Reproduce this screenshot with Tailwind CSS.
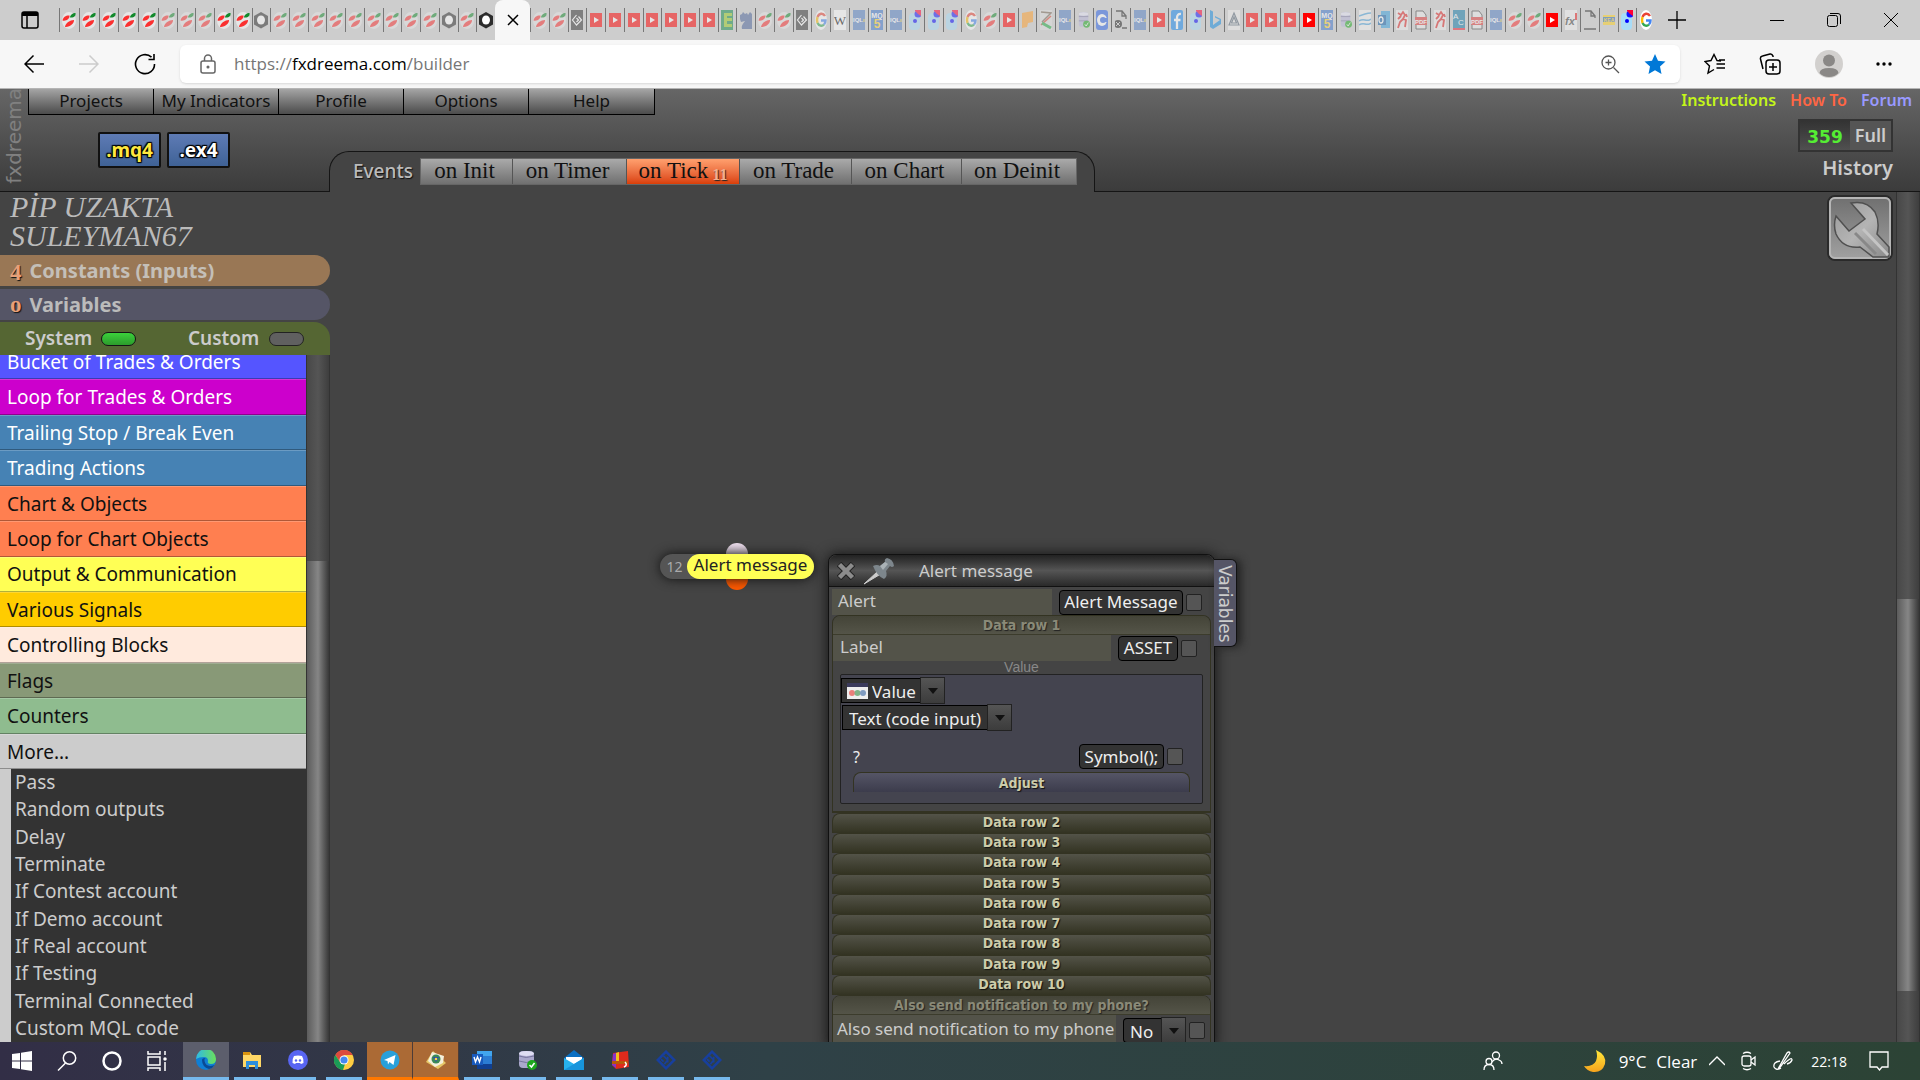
<!DOCTYPE html>
<html lang="en">
<head>
    <meta charset="UTF-8">
    <meta name="viewport" content="width=device-width, initial-scale=1.0">
    <title>fxDreema builder</title>
    <script src="https://cdn.jsdelivr.net/npm/@tailwindcss/browser@4"></script>
</head>
<body class="h-screen flex flex-col overflow-hidden bg-[#444444] font-['Noto_Sans',sans-serif] text-[#cccccc]">

    <!-- Gradients need a rendered svg, so this one is sized to nothing instead of hidden -->
    <svg class="absolute size-0">
        <defs>
            <linearGradient id="lg-edge" x1="0" y1="0" x2="1" y2="0"><stop offset="0" stop-color="#2fb9e6"/><stop offset="1" stop-color="#6be05a"/></linearGradient>
            <linearGradient id="lg-moon" x1="0" y1="0" x2="0" y2="1"><stop offset="0" stop-color="#ffe93b"/><stop offset="1" stop-color="#f6a21c"/></linearGradient>
            <linearGradient id="lg-wrench" x1="0" y1="0" x2="0" y2="1"><stop offset="0" stop-color="#707070"/><stop offset="1" stop-color="#a0a0a0"/></linearGradient>
            <linearGradient id="lg-steel" x1="0" y1="0" x2="1" y2="1"><stop offset="0" stop-color="#9a9a9a"/><stop offset=".5" stop-color="#b4b4b4"/><stop offset="1" stop-color="#8a8a8a"/></linearGradient>
        </defs>
    </svg>

    <!-- Favicons -->
    <svg class="hidden">
        <symbol id="fx" viewBox="0 0 14 20"><ellipse cx="7" cy="10.500" rx="7" ry="8.500" fill="#e6e6e6"/><path d="M8 7.500C8 5 11 3 13.500 3C14 6 12 8 8 7.500z" fill="#138a2c"/><path d="M.5 10.500C1 7 4.500 5 7.500 5.500C8 8.500 4.500 11.500.5 10.500zM3 17C3.500 13 8 10 12 10C12.500 13 8 17.500 3 17z" fill="#fa3030"/></symbol>
        <symbol id="ring" viewBox="0 0 14 20"><path d="M7 2L14 6V14.500L7 18.500L0 14.500V6z" fill="#2c2c2c"/><ellipse cx="7" cy="10" rx="4" ry="4.500" fill="#fff"/></symbol>
        <symbol id="code" viewBox="0 0 12 20"><path d="M0 0h12v20H0z" fill="#333"/><path d="M5.500 5L1.500 10L5.500 15L10.500 10L7.500 6.500M5.500 8L7.500 10L5.500 12" stroke="#fff" fill="none" stroke-width="1.200"/></symbol>
        <symbol id="yt" viewBox="0 0 12 20"><path d="M0 3h12v14H0z" fill="#f00"/><path d="M4 7L9 10L4 13z" fill="#fff"/></symbol>
        <symbol id="ee" viewBox="0 0 12 20"><path d="M0 0h12v20H0z" fill="#138a4c"/><path d="M3 3h8v3H6v2h5v3H6v3h5v3H3z" fill="#9c2"/></symbol>
        <symbol id="knight" viewBox="0 0 12 20"><path d="M0 5L2 4L3 2L5 4L7 3L8 5L10 2L12 4V19H2C1 15 4 13 5 11L1 12L0 9z" fill="#4d659b"/></symbol>
        <symbol id="goog" viewBox="0 0 12 20"><ellipse cx="6" cy="10" rx="6" ry="10" fill="#fff"/><g fill="none" stroke-width="2.400"><path d="M10 6A4.500 6 0 0 0 2.500 7" stroke="#ea4335"/><path d="M2.500 7A5 7 0 0 0 2.500 13" stroke="#fbbc05"/><path d="M2.500 13A4.500 6 0 0 0 9 14.500" stroke="#34a853"/><path d="M9 14.500Q10.500 13 10.500 10.500H6" stroke="#4285f4"/></g></symbol>
        <symbol id="wiki" viewBox="0 0 12 20"><path d="M0 0h12v20H0z" fill="#fff"/><text x="6" y="15" text-anchor="middle" font-family="Liberation Serif" font-size="13">W</text></symbol>
        <symbol id="mql" viewBox="0 0 12 20"><path d="M0 0h12v20H0z" fill="#5580c4"/><text x="5" y="12" text-anchor="middle" font-family="Liberation Sans" font-weight="bold" font-size="6" fill="#fff">IQL</text><path d="M11 9v3" stroke="#fd3"/></symbol>
        <symbol id="mq5" viewBox="0 0 12 20"><path d="M0 0h12v20H0z" fill="#3f76cc"/><text x="6" y="8" text-anchor="middle" font-family="Liberation Sans" font-weight="bold" font-size="7" fill="#fff">MQ</text><text x="6" y="18" text-anchor="middle" font-family="Liberation Sans" font-weight="bold" font-size="12" fill="#ffd42a">5</text></symbol>
        <symbol id="face" viewBox="0 0 12 20"><rect x="0" y="3" width="11" height="17" rx="4" fill="#a8dcf7"/><circle cx="9" cy="4" r="3.500" fill="#11f"/><path d="M6 1L9 4L12 6V0H6z" fill="#f03"/><circle cx="6" cy="11" r="2" fill="#00f"/></symbol>
        <symbol id="orange" viewBox="0 0 12 20"><path d="M1 3L12 1V12L7 13L6 17L1 18z" fill="#ffa02e"/></symbol>
        <symbol id="pens" viewBox="0 0 12 20"><path d="M0 0h12v20H0z" fill="#ddd"/><path d="M1 2L11 3L2 12" fill="none" stroke="#765" stroke-width="1.500"/><path d="M1 15L11 6" stroke="#d43" stroke-width="1.500"/><path d="M2 13L11 18" stroke="#2a4" stroke-width="3"/></symbol>
        <symbol id="db" viewBox="0 0 14 20"><rect x="1" y="1" width="11" height="17" rx="3" fill="#b9b7da"/><path d="M1 6h11M1 11h11" stroke="#77759d"/><ellipse cx="6.500" cy="3" rx="5.500" ry="2" fill="#e8e8f8"/><circle cx="10" cy="15" r="4" fill="#1da81d"/><path d="M8 15L9.500 17L12 13" stroke="#fff" fill="none"/></symbol>
        <symbol id="cc" viewBox="0 0 12 20"><rect width="12" height="20" rx="3" fill="#2b62e8"/><ellipse cx="6" cy="10" rx="5" ry="6" fill="#fff"/><circle cx="7" cy="10" r="3" fill="#2b62e8"/><path d="M8 8H12V12H8z" fill="#2b62e8"/></symbol>
        <symbol id="doc" viewBox="0 0 12 20"><path d="M1 1H7L11 6M7 1V6H11V8M0 19H12" fill="none" stroke="#222" stroke-width="1.300"/></symbol>
        <symbol id="docx" viewBox="0 0 12 20"><path d="M1 1H7L11 6M7 1V6H11V9M7 18H12" fill="none" stroke="#222" stroke-width="1.300"/><circle cx="3" cy="14" r="4" fill="#222"/><path d="M1 12L5 16M5 12L1 16" stroke="#ccc"/></symbol>
        <symbol id="fb" viewBox="0 0 12 20"><rect width="12" height="20" rx="2" fill="#1687ee"/><path d="M10 4Q6 3.500 6 8V19M3 10H9.500" fill="none" stroke="#fff" stroke-width="2.300"/></symbol>
        <symbol id="bing" viewBox="0 0 12 20"><path d="M1 0L4 1.500V15L11 10L6 7.500V6L12 9V14L4 19L1 17z" fill="#138be0"/></symbol>
        <symbol id="tri" viewBox="0 0 12 20"><path d="M0 0h12v20H0z" fill="#eee"/><path d="M6 3L11 15H1zM6 7L8.500 13H3.500z" fill="none" stroke="#567" stroke-width="1.200"/></symbol>
        <symbol id="wave" viewBox="0 0 12 20"><path d="M0 0h12v20H0z" fill="#f3f3f3"/><path d="M0 6Q3 5 6 4T12 3M0 11Q3 9 6 10T12 9M0 15Q3 13 6 14T12 13" fill="none" stroke="#4aa3dd" stroke-width="1.500"/></symbol>
        <symbol id="outlook" viewBox="0 0 12 20"><path d="M3 1H12V18H3z" fill="#3aa0dd"/><path d="M0 5H8V15H0z" fill="#0f5fa8"/><ellipse cx="3" cy="10" rx="2" ry="3" fill="none" stroke="#fff" stroke-width="1.300"/></symbol>
        <symbol id="lion" viewBox="0 0 12 20"><path d="M0 0h12v20H0z" fill="#eee"/><path d="M2 3L5 5L7 2L9 5L7 9L10 10L9 17M7 9L4 12L2 18M5 6L2 9M10 4L11 7" fill="none" stroke="#e02525" stroke-width="1.800"/></symbol>
        <symbol id="pdf" viewBox="0 0 12 20"><path d="M1 6V1H8L11 5V19H1z" fill="#eee" stroke="#444"/><path d="M0 7h12v8H0z" fill="#e03a3a"/><text x="6" y="13.500" text-anchor="middle" font-family="Liberation Sans" font-weight="bold" font-size="6" fill="#fff">PDF</text></symbol>
        <symbol id="cb" viewBox="0 0 12 20"><path d="M0 0h12v20H0z" fill="#137ba8"/><path d="M0 18h12v2H0z" fill="#e23"/><text x="0" y="9" font-family="Liberation Sans" font-size="8" fill="#fff">A</text><text x="5" y="15" font-family="Liberation Sans" font-size="8" fill="#fff">C</text></symbol>
        <symbol id="fxi" viewBox="0 0 12 20"><path d="M0 0h12v20H0z" fill="#f3f3f3"/><text x="0" y="15" font-family="Liberation Sans" font-style="italic" font-weight="bold" font-size="11" fill="#444">fx</text><path d="M11 3V10" stroke="#e22" stroke-width="2"/></symbol>
        <symbol id="ikea" viewBox="0 0 12 20"><path d="M0 5h12v10H0z" fill="#ffd21e"/><path d="M0 7h12v5H0z" fill="#3070b8"/><text x="6" y="12" text-anchor="middle" font-family="Liberation Sans" font-weight="bold" font-size="5" fill="#ffd21e">KEA</text></symbol>
        <symbol id="rune" viewBox="0 0 24 24"><path d="M12 2L22 12L12 22L2 12z" fill="none" stroke="#173f9e" stroke-width="3"/><path d="M9 7L14 12L10 17M6 11L9 14M14 8V15" stroke="#173f9e" stroke-width="2" fill="none"/></symbol>
    </svg>

    <!-- Browser tab strip -->
    <header class="flex h-10 shrink-0 bg-[#cdcdcd] text-black">
        <div class="flex w-[59px] items-center justify-center shrink-0">
            <svg class="size-5" viewBox="0 0 20 20" fill="none" stroke="black" stroke-width="1.500"><rect x="2" y="2" width="16" height="16" rx="2"/><path d="M2 5H18M7 6V18" /><path d="M2 4H18" stroke-width="4"/></svg>
        </div>
        <nav class="flex flex-99" data-tabs="fx! fx! fx! fx! fx!"></nav>
        <nav class="flex flex-337" data-tabs="fx fx fx fx! fx! ring fx fx fx fx fx fx fx fx fx ring fx ring!"></nav>
        <div class="flex w-[35px] shrink-0 items-center justify-center rounded-t-lg bg-[#f7f7f7]">
            <button aria-label="Close tab"><svg class="size-3" viewBox="0 0 12 12" stroke="black" stroke-width="1.500"><path d="M1 1L11 11M11 1L1 11"/></svg></button>
        </div>
        <nav class="flex flex-1125" data-tabs="fx fx code yt yt yt yt yt yt yt ee knight fx fx code goog wiki mql mq5 mql face face face goog fx yt orange pens mql db cc docx mql yt fb face bing tri yt yt yt yt! mq5 db wave outlook lion pdf lion cb pdf mql fx fx yt! fxi doc ikea face! goog!"></nav>
        <div class="flex w-[265px] shrink-0 items-center">
            <button aria-label="New tab" class="flex w-11 justify-center"><svg class="size-[18px]" viewBox="0 0 18 18" stroke="black" stroke-width="1.300"><path d="M9 0V18M0 9H18"/></svg></button>
            <div class="ml-auto flex">
                <button aria-label="Minimize" class="flex w-[57px] items-center justify-center"><svg class="size-3.5" viewBox="0 0 14 14" stroke="black"><path d="M0 7.500H14"/></svg></button>
                <button aria-label="Restore" class="flex w-[57px] items-center justify-center"><svg class="size-3.5" viewBox="0 0 14 14" stroke="black" fill="none"><rect x=".5" y="2.500" width="10" height="11" rx="2"/><path d="M3 .5H11Q13.500.5 13.500 3V11"/></svg></button>
                <button aria-label="Close" class="flex w-[58px] items-center justify-center"><svg class="size-3.5" viewBox="0 0 14 14" stroke="black"><path d="M0 0L14 14M14 0L0 14"/></svg></button>
            </div>
        </div>
    </header>

    <!-- Address bar -->
    <div class="flex h-[49px] shrink-0 items-center border-b border-[#b5b5b5] bg-[#f7f7f7] text-black">
        <div class="flex w-[180px] shrink-0 items-center justify-between pl-6 pr-6">
            <button aria-label="Back"><svg class="size-5" viewBox="0 0 20 20" fill="none" stroke="black" stroke-width="1.500"><path d="M20 10H1M9.500 1.500L1 10L9.500 18.500"/></svg></button>
            <button aria-label="Forward"><svg class="size-5" viewBox="0 0 20 20" fill="none" stroke="#cccccc" stroke-width="1.500"><path d="M0 10H19M10.500 1.500L19 10L10.500 18.500"/></svg></button>
            <button aria-label="Refresh"><svg class="size-[22px]" viewBox="0 0 22 22" fill="none" stroke="black" stroke-width="1.600"><path d="M20.500 11A9.500 9.500 0 1 1 17.500 4.200M20 1V6.500H14.500"/></svg></button>
        </div>
        <div class="flex h-[38px] grow items-center rounded-md bg-white pl-5 pr-3.5 shadow-sm">
            <svg class="h-5 w-4 shrink-0" viewBox="0 0 16 20" fill="none" stroke="#666" stroke-width="1.500"><rect x="1" y="7" width="14" height="12" rx="2"/><path d="M4.500 7V4.500A3.500 3.500 0 0 1 11.500 4.500V7"/><circle cx="8" cy="13" r=".8" fill="#666"/></svg>
            <p class="ml-[18px] grow font-['Open_Sans',sans-serif] text-[17px] text-[#767676]">https://<span class="text-black">fxdreema.com</span>/builder</p>
            <button aria-label="Zoom" class="mr-6"><svg class="size-[19px]" viewBox="0 0 19 19" fill="none" stroke="#555" stroke-width="1.300"><circle cx="7.500" cy="7.500" r="6.500"/><path d="M12.500 12.500L18 18M7.500 4.500V10.500M4.500 7.500H10.500"/></svg></button>
            <button aria-label="Edit favorite"><svg class="size-[22px]" viewBox="0 0 22 22" fill="#0078d7"><path d="M11 1L14 7.800L21.500 8.500L16 13.500L17.500 21L11 17.300L4.500 21L6 13.500L.5 8.500L8 7.800z"/></svg></button>
        </div>
        <div class="flex w-60 shrink-0 items-center justify-between pl-6 pr-7">
            <button aria-label="Favorites"><svg class="size-[22px]" viewBox="0 0 22 22" fill="none" stroke="black" stroke-width="1.400"><path d="M17 8L13 7.500L10 1.500L7 7.500L1 8.500L5.500 13L4 20L10 16.500M12.500 11H21M12.500 15H21M15 7H21"/></svg></button>
            <button aria-label="Collections"><svg class="size-[22px]" viewBox="0 0 22 22" fill="none" stroke="black" stroke-width="1.500"><rect x="7" y="7" width="14" height="14" rx="3"/><path d="M14 10V18M10 14H18M4 16L1.500 6Q1 3.500 3.500 3L11 1Q13 .5 14 3V4"/></svg></button>
            <button aria-label="Account"><svg class="size-7" viewBox="0 0 28 28"><circle cx="14" cy="14" r="14" fill="#d2d0ce"/><circle cx="14" cy="10.500" r="6" fill="#8a8886"/><path d="M4.500 23Q5 18 14 18T23.500 23Q20 27 14 27T4.500 23z" fill="#8a8886"/></svg></button>
            <button aria-label="Settings and more"><svg class="h-1 w-4" viewBox="0 0 16 4"><circle cx="2" cy="2" r="1.700"/><circle cx="8" cy="2" r="1.700"/><circle cx="14" cy="2" r="1.700"/></svg></button>
        </div>
    </div>

    <!-- Builder top bar -->
    <div class="flex h-[103px] shrink-0 bg-linear-to-b from-[#666666] to-[#3b3b3b]">
        <div class="flex w-7 shrink-0 items-center justify-center border-b border-[#151515] pb-2">
            <span class="rotate-180 font-['DejaVu_Sans',sans-serif] text-[20px] leading-none text-[#808080] [writing-mode:vertical-rl]">fxdreema</span>
        </div>
        <div class="relative flex grow flex-col">
            <nav class="flex h-[26px] w-max divide-x divide-black border-x border-b border-black text-center text-[17px] leading-[23px] text-[#111111]">
                <a href="#" class="w-[125px] bg-linear-to-b from-[#a5a5a5] to-[#4c4c4c]">Projects</a>
                <a href="#" class="w-[125px] bg-linear-to-b from-[#a5a5a5] to-[#4c4c4c]">My Indicators</a>
                <a href="#" class="w-[125px] bg-linear-to-b from-[#a5a5a5] to-[#4c4c4c]">Profile</a>
                <a href="#" class="w-[125px] bg-linear-to-b from-[#a5a5a5] to-[#4c4c4c]">Options</a>
                <a href="#" class="w-[125px] bg-linear-to-b from-[#a5a5a5] to-[#4c4c4c]">Help</a>
            </nav>
            <div class="flex grow items-end">
                <div class="flex h-full w-[301px] items-start gap-1.5 border-b border-[#151515] pl-[70px] pt-[17px]">
                    <button class="h-9 w-[63px] rounded-xs border-2 border-[#111111] bg-linear-to-b from-[#5e7bb5] to-[#3f6296] text-[19px] leading-8 font-bold text-[#ffe940] text-shadow-[0_0_2px_#000,1px_1px_1px_#000,-1px_-1px_1px_#000,1px_-1px_1px_#000,-1px_1px_1px_#000]">.mq4</button>
                    <button class="h-9 w-[63px] rounded-xs border-2 border-[#111111] bg-linear-to-b from-[#5e7bb5] to-[#3f6296] text-[19px] leading-8 font-bold text-white text-shadow-[0_0_2px_#000,1px_1px_1px_#000,-1px_-1px_1px_#000,1px_-1px_1px_#000,-1px_1px_1px_#000]">.ex4</button>
                </div>
                <nav class="flex h-[41px] w-[766px] rounded-t-[20px] border-x border-t border-[#151515] bg-[#444444] pl-[23px] pt-1.5">
                    <h2 class="w-[67px] text-[19px] leading-[26px] font-medium text-[#bbbbbb] text-shadow-[1px_1px_1px_#111]">Events</h2>
                    <div class="flex h-[27px] divide-x divide-[#555555] border border-[#666666] text-center font-['Georgia','Liberation_Serif',serif] text-[23px] leading-[23px] text-[#111111]">
                        <a href="#" class="w-[92px] bg-linear-to-b from-[#aaaaaa] to-[#707070] pr-1">on Init</a>
                        <a href="#" class="w-[114px] bg-linear-to-b from-[#aaaaaa] to-[#707070] pr-1">on Timer</a>
                        <a href="#" class="flex w-[113px] justify-center gap-1 bg-linear-to-b from-[#ffa06e] to-[#d93e05]">on Tick<span class="pt-2 text-[16px] leading-[16px] font-bold text-[#f0b090] text-shadow-[1px_1px_1px_#222]">11</span></a>
                        <a href="#" class="w-28 bg-linear-to-b from-[#aaaaaa] to-[#707070] pr-1">on Trade</a>
                        <a href="#" class="w-[110px] bg-linear-to-b from-[#aaaaaa] to-[#707070] pr-1">on Chart</a>
                        <a href="#" class="w-[114px] bg-linear-to-b from-[#aaaaaa] to-[#707070] pr-1">on Deinit</a>
                    </div>
                </nav>
                <div class="h-full grow border-b border-[#151515]"></div>
            </div>
            <div class="absolute right-0 top-0 flex flex-col items-end">
                <nav class="flex gap-3.5 pr-2 text-[16px] leading-[23px] font-semibold">
                    <a href="#" class="text-[#c3f51a]">Instructions</a>
                    <a href="#" class="text-[#ff6644]">How To</a>
                    <a href="#" class="text-[#9999ff]">Forum</a>
                </nav>
                <div class="mr-[27px] mt-[7px] flex h-[33px] w-[95px] border-2 border-[#333333] bg-[#555555] text-center leading-[29px] font-bold">
                    <span class="w-[50px] bg-linear-to-b from-[#333333] to-[#505050] font-['DejaVu_Sans',sans-serif] text-[17px] leading-8 text-[#55ee33]">359</span>
                    <a href="#" class="grow text-[18px] font-semibold">Full</a>
                </div>
                <a href="#" class="mr-[27px] mt-0.5 text-[20px] leading-7 font-semibold">History</a>
            </div>
        </div>
    </div>

    <main class="flex min-h-0 grow">
        <!-- Block library -->
        <aside class="flex w-[330px] shrink-0 flex-col">
            <h1 class="h-[63px] pl-2.5 font-['Monotype_Corsiva','Liberation_Serif',serif] text-[30px] leading-[29px] text-[#bbbbbb] italic">PİP UZAKTA<br>SULEYMAN67</h1>
            <button class="mb-[3px] flex h-[31px] shrink-0 items-center gap-2 rounded-r-2xl bg-[#997755] pl-2.5 text-left text-[20px] leading-7 font-bold text-[#c4bfb8]"><span class="pt-1 font-['Liberation_Serif',serif] text-[23px] leading-none text-[#e8a078] text-shadow-[1px_1px_1px_#111]">4</span>Constants (Inputs)</button>
            <button class="mb-0.5 flex h-[31px] shrink-0 items-center gap-2 rounded-r-2xl bg-[#555566] pl-2.5 text-left text-[20px] leading-7 font-bold text-[#bbbbbb]"><span class="font-['Liberation_Serif',serif] text-[23px] leading-none font-bold text-[#e8a078] text-shadow-[1px_1px_1px_#111]">o</span>Variables</button>
            <div class="flex h-[33px] shrink-0 items-center rounded-tr-2xl bg-[#556633] pl-[25px] text-[19px] font-semibold">
                <label for="sys" class="w-[76px]">System</label>
                <input id="sys" type="checkbox" checked class="h-3.5 w-[35px] appearance-none rounded-full border border-[#151515] bg-linear-to-b from-[#3bd13b] to-[#2c9c2c]">
                <label for="cus" class="ml-[52px] w-[81px]">Custom</label>
                <input id="cus" type="checkbox" class="h-3.5 w-[35px] appearance-none rounded-full border border-[#222222] bg-[#606060]">
            </div>
            <div class="flex min-h-0 grow">
                <div class="grow overflow-hidden text-[19px]">
                    <ul class="-mt-[11px] grid h-[425px] auto-rows-fr text-white">
                        <li class="flex items-center border-b border-black/30 bg-[#5555ff] pt-0.5 pl-[7px]">Bucket of Trades &amp; Orders</li>
                        <li class="flex items-center border-t border-b border-t-white/20 border-b-black/30 bg-[#cc00cc] pt-px pl-[7px]">Loop for Trades &amp; Orders</li>
                        <li class="flex items-center border-t border-b border-t-white/20 border-b-black/30 bg-[#4682b4] pt-px pl-[7px]">Trailing Stop / Break Even</li>
                        <li class="flex items-center border-t border-b border-t-white/20 border-b-black/30 bg-[#4682b4] pt-px pl-[7px]">Trading Actions</li>
                        <li class="flex items-center border-t border-b border-t-white/20 border-b-black/30 bg-[#ff7f50] pt-px pl-[7px] text-[#111111]">Chart &amp; Objects</li>
                        <li class="flex items-center border-t border-b border-t-white/20 border-b-black/30 bg-[#ff7f50] pt-px pl-[7px] text-[#111111]">Loop for Chart Objects</li>
                        <li class="flex items-center border-t border-b border-t-white/20 border-b-black/30 bg-[#ffff55] pt-px pl-[7px] text-[#111111]">Output &amp; Communication</li>
                        <li class="flex items-center border-t border-b border-t-white/20 border-b-black/30 bg-[#ffcc00] pt-px pl-[7px] text-[#111111]">Various Signals</li>
                        <li class="flex items-center border-t border-b border-t-white/20 border-b-black/30 bg-[#ffeadd] pt-px pl-[7px] text-[#111111]">Controlling Blocks</li>
                        <li class="flex items-center border-t border-b border-t-white/20 border-b-black/30 bg-[#889977] pt-px pl-[7px] text-[#111111]">Flags</li>
                        <li class="flex items-center border-t border-b border-t-white/20 border-b-black/30 bg-[#8fbc8f] pt-px pl-[7px] text-[#111111]">Counters</li>
                        <li class="flex items-center border-t border-b border-t-white/20 border-b-black/30 bg-[#cccccc] pt-px pl-[7px] text-[#111111]">More...</li>
                    </ul>
                    <ul class="grid h-[273px] auto-rows-fr items-center border-l-[11px] border-[#cccccc] bg-[#333333] pl-1 leading-[27px]">
                        <li>Pass</li>
                        <li>Random outputs</li>
                        <li>Delay</li>
                        <li>Terminate</li>
                        <li>If Contest account</li>
                        <li>If Demo account</li>
                        <li>If Real account</li>
                        <li>If Testing</li>
                        <li>Terminal Connected</li>
                        <li>Custom MQL code</li>
                    </ul>
                </div>
                <div class="w-6 shrink-0 border-x border-[#333333] bg-linear-to-r from-[#484848] via-[#555555] to-[#3e3e3e] pt-[206px]">
                    <div class="h-full bg-linear-to-r from-[#5c5c5c] via-[#868686] to-[#383838]"></div>
                </div>
            </div>
        </aside>

        <!-- Canvas -->
        <section class="relative grow overflow-hidden">
            <div class="absolute left-[396px] top-[351px] size-[22px] rounded-full bg-linear-to-b from-[#f0e0f0] to-[#a8a0a8]"></div>
            <div class="absolute left-[396px] top-[376px] size-[22px] rounded-full bg-[#ff5a00]"></div>
            <div class="absolute left-[330px] top-[362px] flex h-[25px] w-[154px] items-center rounded-full bg-[#555555] text-[17px] shadow-[0_0_12px_#111]">
                <span class="w-[27px] pl-0.5 text-center text-[14px] text-[#aaaaaa]">12</span>
                <span class="h-[25px] grow rounded-full bg-[#ffff55] text-center leading-[22px] text-[#222222]">Alert message</span>
            </div>

            <form class="absolute left-[498px] top-[362px] w-[387px] rounded-t-lg border border-[#111111] bg-[#444444] text-[17px] shadow-[0_0_14px_#111]">
                <div class="flex h-8 items-center rounded-t-lg border-b border-[#111111] bg-linear-to-b from-[#222222] via-[#555555] to-[#2a2a2a] pl-2">
                    <button type="button" aria-label="Close"><svg class="size-[18px]" viewBox="0 0 18 18" fill="none"><path d="M2 2L16 16M16 2L2 16" stroke="#222" stroke-width="6.500"/><path d="M2.500 2.500L15.500 15.500M15.500 2.500L2.500 15.500" stroke="#8c8c8c" stroke-width="4.500"/></svg></button>
                    <button type="button" aria-label="Pin" class="ml-2"><svg class="h-7 w-8" viewBox="0 0 32 28"><path d="M1 27L14 15L16 18z" fill="#ccc" stroke="#ccc"/><path d="M10 9Q14 7 17 9L22 5Q21 2 24 1Q30 2 31 9Q29 11 27 9L23 14Q25 19 21 22Q14 19 10 9z" fill="#7d868c"/><path d="M17 9L22 5L25 7L20 13z" fill="#aab2b6"/></svg></button>
                    <h3 class="ml-6">Alert message</h3>
                </div>
                <div class="px-[3px] pt-0.5">
                    <div class="flex h-[26px] items-center">
                        <label for="alert" class="h-full w-[220px] bg-[#535349] pl-1.5 leading-[24px]">Alert</label>
                        <button id="alert" type="button" class="ml-[7px] h-[25px] w-[124px] rounded-sm border border-black bg-[#333333] leading-[22px] text-[#eeeeee]">Alert Message</button>
                        <input type="checkbox" aria-label="Alert option" class="ml-[3px] h-[17px] w-4 appearance-none rounded-xs border border-[#222222] bg-[#555555]">
                    </div>

                    <fieldset class="rounded-t-lg border border-b-2 border-[#333322]">
                        <button type="button" class="block h-[19px] w-full rounded-t-lg border-b border-[#3c3c2c] bg-linear-to-b from-[#444438] to-[#545448] text-center text-[14px] leading-[16px] font-bold text-[#8a8a78] text-shadow-[1px_1px_1px_#222] font-['DejaVu_Sans_Condensed','DejaVu_Sans',sans-serif]">Data row 1</button>
                        <div class="flex h-[26px] items-center">
                            <label for="label" class="h-full w-[278px] bg-[#535349] pl-[7px] leading-[24px]">Label</label>
                            <button id="label" type="button" class="ml-[7px] h-[25px] w-[60px] rounded-sm border border-black bg-[#333333] leading-[22px] text-[#eeeeee]">ASSET</button>
                            <input type="checkbox" aria-label="Label option" class="ml-[3px] h-[17px] w-4 appearance-none rounded-xs border border-[#222222] bg-[#555555]">
                        </div>
                        <h4 class="text-center font-['Liberation_Sans',sans-serif] text-[14px] leading-[13px] text-[#888888]">Value</h4>
                        <div class="mx-[7px] mb-[7px] h-[130px] rounded-xs border border-[#222222] bg-[#44444f] pt-0.5">
                            <div class="flex h-[27px] w-max">
                                <label for="kind" class="my-px flex items-center border border-r-0 border-black bg-[#333333] pl-[5px]"><svg class="h-4 w-[21px]" viewBox="0 0 21 16"><path d="M0 0H21V16H0z" fill="#eee"/><path d="M0 0H21V4H0z" fill="#3b3b5c"/><circle cx="5" cy="10" r="3" fill="#e97f7a"/><circle cx="10.500" cy="10" r="3" fill="#7fb287"/><circle cx="16" cy="10" r="3" fill="#7f9bc0"/></svg></label>
                                <select id="kind" class="my-px appearance-none border-y border-black bg-[#333333] pl-1 pr-1 text-[#eeeeee]"><option>Value</option></select>
                                <span class="flex w-[25px] items-center justify-center border border-[#222222] bg-linear-to-b from-[#555555] to-[#3c3c3c]"><svg class="h-1.5 w-2.5" viewBox="0 0 10 6"><path d="M0 0H10L5 6z" fill="#111"/></svg></span>
                            </div>
                            <div class="ml-px flex h-[27px] w-max">
                                <select aria-label="Value type" class="my-px appearance-none border border-r-0 border-black bg-[#333333] pl-1.5 pr-[5px] text-[#eeeeee]"><option>Text (code input)</option></select>
                                <span class="flex w-[25px] items-center justify-center border border-[#222222] bg-linear-to-b from-[#555555] to-[#3c3c3c]"><svg class="h-1.5 w-2.5" viewBox="0 0 10 6"><path d="M0 0H10L5 6z" fill="#111"/></svg></span>
                            </div>
                            <div class="mt-[13px] flex h-[25px] items-center pl-3">
                                <label for="code" class="w-[226px] text-[16px] leading-[22px] text-[#eeeeee]">?</label>
                                <button id="code" type="button" class="h-[25px] w-[85px] rounded-sm border border-black bg-[#333333] leading-[22px] text-[#eeeeee]">Symbol();</button>
                                <input type="checkbox" aria-label="Code option" class="ml-[3px] h-[17px] w-4 appearance-none rounded-xs border border-[#222222] bg-[#555555]">
                            </div>
                            <button type="button" class="mx-3 mt-[3px] block h-5 w-[337px] rounded-t-lg border border-b-0 border-[#333322] bg-linear-to-b from-[#555566] to-[#3c3c4c] text-center text-[14px] leading-[16px] font-bold text-[#ccccaa] text-shadow-[1px_1px_1px_#111] font-['DejaVu_Sans_Condensed','DejaVu_Sans',sans-serif]">Adjust</button>
                        </div>
                    </fieldset>

                    <div id="data-rows" class="grid h-[182px] auto-rows-fr"></div>

                    <fieldset class="rounded-t-lg border border-[#333322]">
                        <button type="button" class="block h-[19px] w-full rounded-t-lg border-b border-[#3c3c2c] bg-linear-to-b from-[#444438] to-[#545448] text-center text-[14px] leading-[16px] font-bold text-[#8a8a78] text-shadow-[1px_1px_1px_#222] font-['DejaVu_Sans_Condensed','DejaVu_Sans',sans-serif]">Also send notification to my phone?</button>
                        <div class="flex h-[31px] items-center">
                            <label for="phone" class="h-full w-[283px] bg-[#535349] pl-1 leading-[28px] whitespace-nowrap">Also send notification to my phone</label>
                            <div class="ml-[7px] flex h-[27px]">
                                <select id="phone" class="my-px w-[38px] appearance-none rounded-l-sm border border-r-0 border-black bg-[#333333] pl-1.5 text-[#eeeeee]"><option>No</option></select>
                                <span class="flex w-[25px] items-center justify-center border border-[#222222] bg-linear-to-b from-[#555555] to-[#3c3c3c]"><svg class="h-1.5 w-2.5" viewBox="0 0 10 6"><path d="M0 0H10L5 6z" fill="#111"/></svg></span>
                            </div>
                            <input type="checkbox" aria-label="Phone option" class="ml-[3px] h-[17px] w-4 appearance-none rounded-xs border border-[#222222] bg-[#555555]">
                        </div>
                    </fieldset>
                </div>
                <button type="button" class="absolute left-full top-1 h-[88px] w-[23px] rounded-r-md border border-l-0 border-[#111111] bg-[#555566] pt-0.5 text-[17px] leading-[22px] shadow-[4px_0_8px_#222] [writing-mode:vertical-rl] font-['DejaVu_Sans',sans-serif]">Variables</button>
            </form>

            <button aria-label="Tools" class="absolute right-[3px] top-[3px] size-[66px] rounded-lg border-2 border-[#2a2a2a] bg-[#888888]">
                <svg class="size-full" viewBox="0 0 62 62"><rect x="1" y="1" width="60" height="60" rx="5" fill="url(#lg-wrench)" stroke="#b5b5b5" stroke-width="2"/><path d="M22 6Q38 3 46 15Q51 25 48 37L60 50V60H44L31 50Q14 52 7 37Q4 28 7 19L20 34L36 22z" fill="url(#lg-steel)" stroke="#505050" stroke-width="1.500"/><path d="M26 36L47 57" stroke="#888" stroke-width="3"/><path d="M34 32L59 58" stroke="#c4c4c4" stroke-width="3"/></svg>
            </button>
        </section>
        <div class="w-6 shrink-0 border-x border-[#333333] bg-linear-to-r from-[#484848] via-[#555555] to-[#3e3e3e] pt-[407px] pb-[51px]">
            <div class="h-full bg-linear-to-r from-[#5c5c5c] via-[#868686] to-[#383838]"></div>
        </div>
    </main>

    <!-- Taskbar -->
    <footer class="flex h-[38px] shrink-0 bg-linear-to-r from-[#322e46] via-[#2f4147] via-40% to-[#2c4335] text-white">
        <div class="flex w-[183px] shrink-0 items-center justify-around pr-1">
            <button aria-label="Start"><svg class="size-5" viewBox="0 0 20 20" fill="white"><path d="M0 3L8 2V9.500H0zM9 1.800L20 0V9.500H9zM0 10.500H8V18L0 17zM9 10.500H20V20L9 18.200z"/></svg></button>
            <button aria-label="Search"><svg class="size-5" viewBox="0 0 20 20" fill="none" stroke="white" stroke-width="1.500"><circle cx="12.500" cy="7" r="6.200"/><path d="M8.500 12L1 19.500"/></svg></button>
            <button aria-label="Cortana"><svg class="size-5" viewBox="0 0 20 20" fill="none" stroke="white" stroke-width="2.500"><circle cx="10" cy="10" r="8.500"/></svg></button>
            <button aria-label="Task view"><svg class="size-5" viewBox="0 0 20 20" fill="none" stroke="white" stroke-width="1.500"><path d="M1 0V3H13V0M1 6H13V14H1zM1 20V17H13V20M18 0V4M18 11V20"/><circle cx="18" cy="8" r="1" fill="white"/></svg></button>
        </div>
        <a href="#" aria-label="Edge" class="flex w-[46px] items-center justify-center border-b-3 border-[#76b9ed] bg-[#5c5e6c]"><svg class="size-5" viewBox="0 0 20 20"><circle cx="10" cy="10" r="10" fill="#0f7fd5"/><path d="M0 9A10 10 0 0 1 20 9Q20 14 15 14Q11 14 12 11Q12 7 8 7Q3 7 0 9z" fill="url(#lg-edge)"/><path d="M6 10Q6 17 13 19Q17 18 18.500 15Q10 18 8.500 11Q8 9 9.500 8Q6 8 6 10z" fill="#0a4a94"/></svg></a>
        <div id="taskbar" class="flex"></div>
        <div class="ml-auto flex items-center pr-[31px]">
            <svg class="mr-20 size-5" viewBox="0 0 20 20" fill="none" stroke="white" stroke-width="1.300"><circle cx="13" cy="4.500" r="3.500"/><path d="M9 11Q12 6.500 16 9Q19 10 19 13"/><circle cx="6" cy="10.500" r="3"/><path d="M1 19Q1 13.500 6 13.500T11 19"/></svg>
            <svg class="mr-3 size-6" viewBox="0 0 24 24"><path d="M13 1Q24 6 22 15Q19 24 10 23Q4 22 1 17Q10 18 13 12Q15 7 13 1z" fill="url(#lg-moon)"/></svg>
            <span class="pt-0.5 font-['Open_Sans',sans-serif] text-[17px]">9°C</span>
            <span class="ml-2.5 pt-0.5 font-['Open_Sans',sans-serif] text-[17px]">Clear</span>
            <svg class="ml-3 h-2.5 w-4" viewBox="0 0 16 10" fill="none" stroke="white" stroke-width="1.300"><path d="M0 9L8 1L16 9"/></svg>
            <svg class="ml-4 h-5 w-4" viewBox="0 0 16 20" fill="none" stroke="white" stroke-width="1.300"><rect x="1" y="5" width="9" height="10" rx="2"/><path d="M10 9L14 6V14L10 11M2 2.500Q6 0 10 2.500M2 17.500Q6 20 10 17.500"/></svg>
            <svg class="ml-4 size-5" viewBox="0 0 20 20" fill="none" stroke="white" stroke-width="1.300"><path d="M5 18L14 2Q16 0 17 2L8 15zM11 13Q19 5 19 9Q18 12 14 13M7 10Q0 11 1 16Q3 20 8 17"/></svg>
            <time class="ml-[18px] font-['Open_Sans',sans-serif] text-[14px]">22:18</time>
            <svg class="ml-[22px] size-5" viewBox="0 0 20 20" fill="none" stroke="white" stroke-width="1.300"><path d="M1 1H19V16H13L10.500 19L8 16H1z"/></svg>
        </div>
    </footer>

    <script>
        // A trailing "!" marks a tab that is loaded, the rest are asleep and drawn faded
        document.querySelectorAll('[data-tabs]').forEach(function(nav) {
            nav.innerHTML = nav.dataset.tabs.split(' ').map(function(tab) {
                const awake = tab.endsWith('!');
                const id = tab.replace('!', '');
                const size = id === 'fx' || id === 'ring' ? 'h-5 w-3.5' : 'h-5 w-3';
                return '<a href="#" aria-label="Tab" class="my-2 flex min-w-0 flex-1 items-center justify-center border-l border-[#777777]">' +
                    '<svg class="' + size + (awake ? '' : ' opacity-50') + '"><use href="#' + id + '"/></svg></a>';
            }).join('');
        });

        const rows = document.getElementById('data-rows');
        for (let i = 2; i <= 10; i++) {
            rows.innerHTML += '<button type="button" class="flex justify-center rounded-t-lg border border-b-0 border-[#333322] bg-linear-to-b from-[#535348] to-[#333322] text-[14px] leading-[16px] font-bold text-[#ccccaa] text-shadow-[1px_1px_1px_#111] font-[\'DejaVu_Sans_Condensed\',\'DejaVu_Sans\',sans-serif]">Data row ' + i + '</button>';
        }

        const apps = [
            ['File Explorer', 'blue', '<path d="M1 2H8L10 5H19V17H1z" fill="#ffd766"/><path d="M1 2H8V5H1z" fill="#d9930f"/><path d="M4 19V11H16V19H13V15H7V19z" fill="#2f8fdc"/>'],
            ['Discord', 'blue', '<circle cx="10" cy="10" r="10" fill="#5865f2"/><path d="M6 6Q10 5 14 6Q16 9 15.500 13L13 14L12 13H8L7 14L4.500 13Q4 9 6 6z" fill="#fff"/><circle cx="8" cy="10.500" r="1.200" fill="#5865f2"/><circle cx="12" cy="10.500" r="1.200" fill="#5865f2"/>'],
            ['Chrome', 'blue', '<circle cx="10" cy="10" r="10" fill="#ffcd42"/><path d="M1.300 5A10 10 0 0 1 18.700 5H10L6 12z" fill="#dd4b3e"/><path d="M1.300 5L6 12L11 14L9 20A10 10 0 0 1 1.300 5z" fill="#1a9c57"/><circle cx="10" cy="10" r="4.500" fill="#fff"/><circle cx="10" cy="10" r="3.600" fill="#4688f1"/>'],
            ['Telegram', 'orange', '<circle cx="10" cy="10" r="9.500" fill="#28a0da"/><path d="M4 10L15.500 5L13.500 15L9.500 12L8 14.500L7.500 11z" fill="#fff"/>'],
            ['MetaTrader', 'orange', '<path d="M7 1L20 13L12 19L0 12z" fill="#e6c767"/><path d="M6 2L18 6L17 13L9 17L2 11z" fill="#f4f0dc"/><circle cx="10" cy="9" r="4.500" fill="#3b8a58"/><path d="M7 7L13 7L10 12z" fill="#2b4fa8"/><circle cx="10" cy="9" r="1.300" fill="#ffd84a"/>'],
            ['Word', 'blue', '<path d="M5 1H20V19H5z" fill="#2b7cd3"/><path d="M5 1H20V6H5z" fill="#41a5ee"/><path d="M5 14H20V19H5z" fill="#103f91"/><path d="M0 4H11V15H0z" fill="#185abd"/><path d="M2 7L3.500 12L5.500 7L7.500 12L9 7" fill="none" stroke="#fff" stroke-width="1.400"/>'],
            ['Database', 'blue', '<rect x="1" y="1" width="15" height="17" rx="4" fill="#aaa8cc"/><path d="M1 6Q8 9 16 6M1 11Q8 14 16 11" stroke="#77759d" fill="none"/><ellipse cx="8.500" cy="3.500" rx="7.500" ry="2.500" fill="#deddf2"/><circle cx="14" cy="15" r="5" fill="#1da81d"/><path d="M11.500 15L13.500 17L16.500 13" stroke="#fff" stroke-width="1.500" fill="none"/>'],
            ['Mail', 'blue', '<path d="M0 8L10 0L20 8V12H0z" fill="#0a6fc2"/><path d="M2 7H18V14H2z" fill="#fff"/><path d="M0 8L10 14L20 8V20H0z" fill="#27b2ee"/><path d="M0 20L20 8V20z" fill="#1795dc"/>'],
            ['WinRAR', 'blue', '<path d="M3 3L18 1L19 17L6 19L2 15z" fill="#e02a1c"/><path d="M3 4L6 3V18L2 15z" fill="#8a31c9"/><path d="M6 3L9 2V13H6z" fill="#f4c01c"/><path d="M2 11H18V14H2z" fill="#b9570c"/><path d="M15 12Q18 15 14 17" stroke="#fff" fill="none" stroke-width="1.500"/>'],
            ['Bot', 'blue', '<use href="#rune"/>'],
            ['Bot', 'blue', '<use href="#rune"/>']
        ];
        document.getElementById('taskbar').innerHTML = apps.map(function(app) {
            const box = app[1] === 'orange' ? 'w-[46px] bg-[#ab6a35] border-[#ff7800] border-b-3 border-r border-r-[#4c3c38]' : 'mx-[5px] w-9 border-b-3 border-[#76b9ed]';
            return '<a href="#" aria-label="' + app[0] + '" class="flex items-center justify-center ' + box + '"><svg class="size-5" viewBox="0 0 20 20">' + app[2] + '</svg></a>';
        }).join('');
    </script>
</body>
</html>
